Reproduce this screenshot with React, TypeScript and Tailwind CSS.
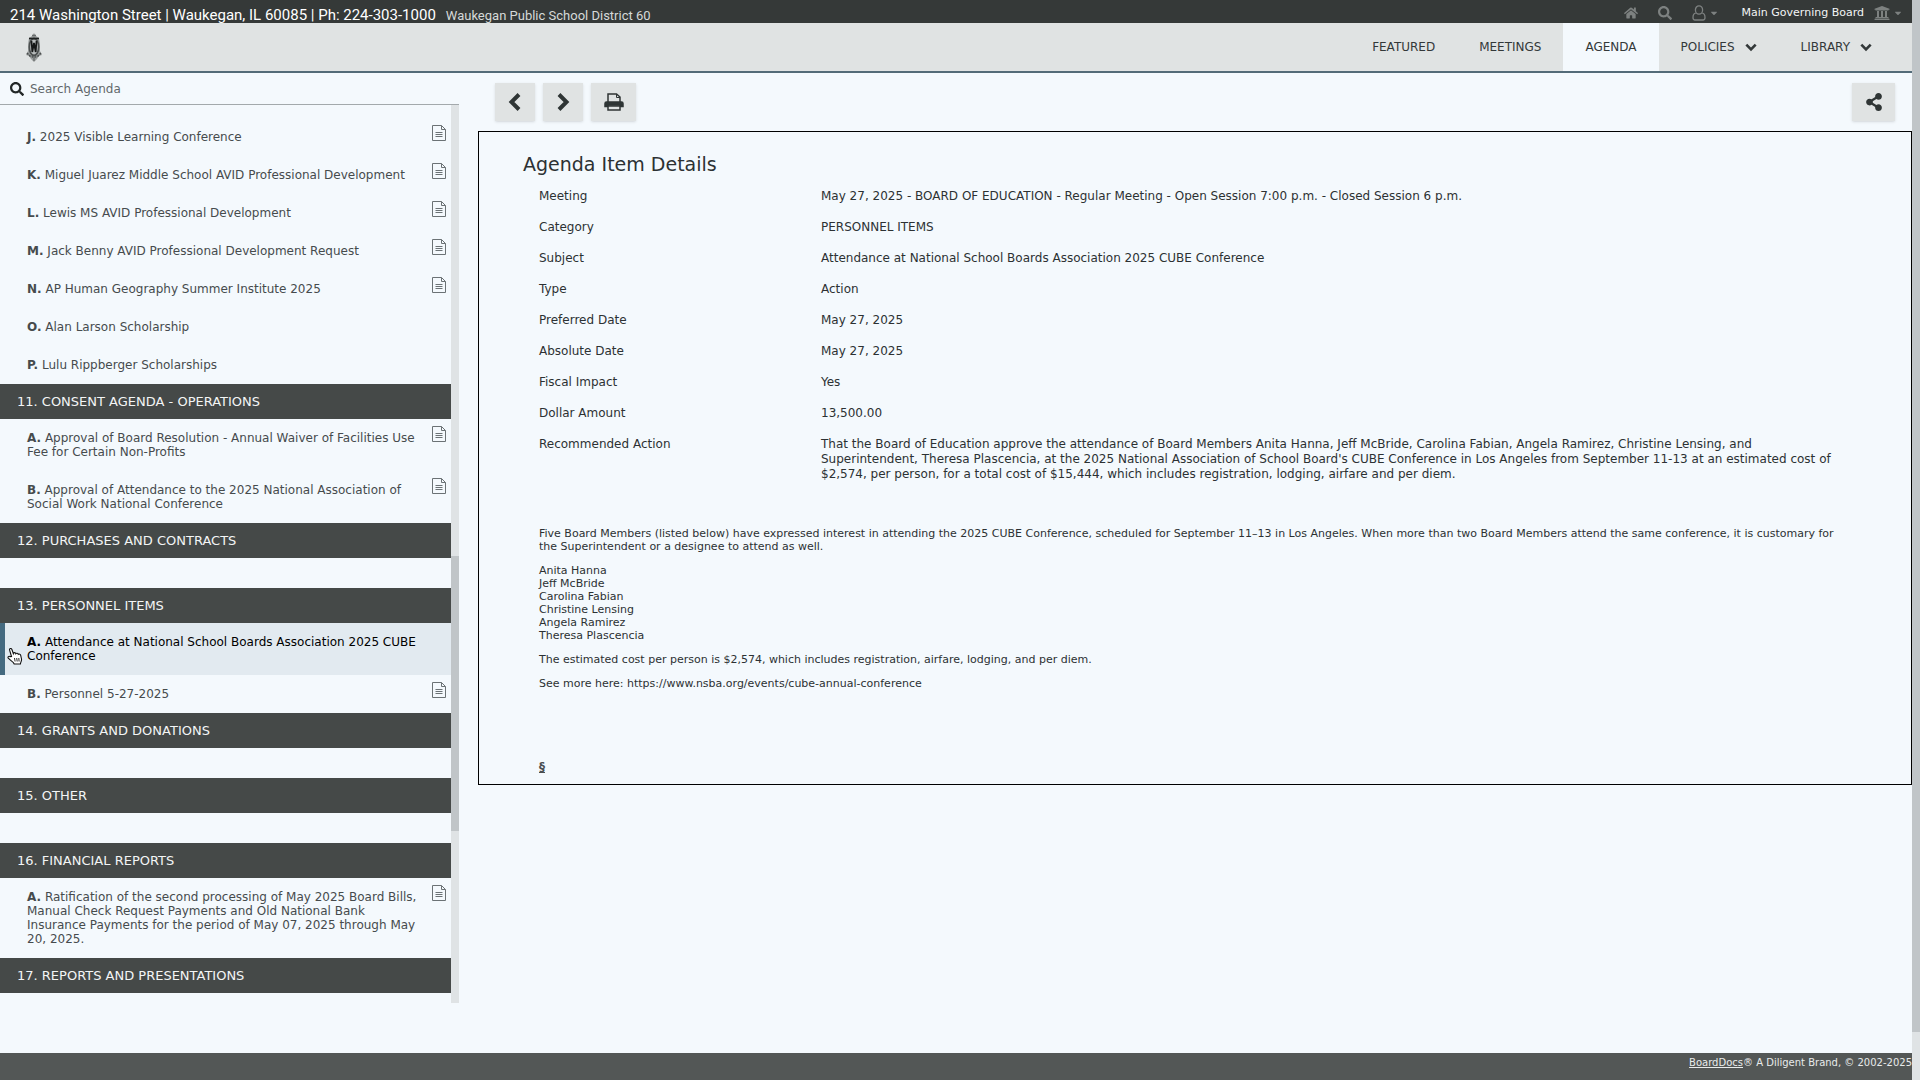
import React from "react";
import { FaCaretDown, FaHome, FaSearch, FaShareAlt, FaUniversity } from "react-icons/fa";

type Item = { letter: string; title: string; file?: boolean; active?: boolean };
type Section = { title?: string; items: Item[] };

const sections: Section[] = [
  {
    items: [
      { letter: "J", title: "2025 Visible Learning Conference", file: true },
      { letter: "K", title: "Miguel Juarez Middle School AVID Professional Development", file: true },
      { letter: "L", title: "Lewis MS AVID Professional Development", file: true },
      { letter: "M", title: "Jack Benny AVID Professional Development Request", file: true },
      { letter: "N", title: "AP Human Geography Summer Institute 2025", file: true },
      { letter: "O", title: "Alan Larson Scholarship" },
      { letter: "P", title: "Lulu Rippberger Scholarships" },
    ],
  },
  {
    title: "11. CONSENT AGENDA - OPERATIONS",
    items: [
      {
        letter: "A",
        title: "Approval of Board Resolution - Annual Waiver of Facilities Use Fee for Certain Non-Profits",
        file: true,
      },
      {
        letter: "B",
        title: "Approval of Attendance to the 2025 National Association of Social Work National Conference",
        file: true,
      },
    ],
  },
  { title: "12. PURCHASES AND CONTRACTS", items: [] },
  {
    title: "13. PERSONNEL ITEMS",
    items: [
      {
        letter: "A",
        title: "Attendance at National School Boards Association 2025 CUBE Conference",
        active: true,
      },
      { letter: "B", title: "Personnel 5-27-2025", file: true },
    ],
  },
  { title: "14. GRANTS AND DONATIONS", items: [] },
  { title: "15. OTHER", items: [] },
  {
    title: "16. FINANCIAL REPORTS",
    items: [
      {
        letter: "A",
        title:
          "Ratification of the second processing of May 2025 Board Bills, Manual Check Request Payments and Old National Bank Insurance Payments for the period of May 07, 2025 through May 20, 2025.",
        file: true,
      },
    ],
  },
  { title: "17. REPORTS AND PRESENTATIONS", items: [] },
];

const details = [
  ["Meeting", "May 27, 2025 - BOARD OF EDUCATION - Regular Meeting - Open Session 7:00 p.m. - Closed Session 6 p.m."],
  ["Category", "PERSONNEL ITEMS"],
  ["Subject", "Attendance at National School Boards Association 2025 CUBE Conference"],
  ["Type", "Action"],
  ["Preferred Date", "May 27, 2025"],
  ["Absolute Date", "May 27, 2025"],
  ["Fiscal Impact", "Yes"],
  ["Dollar Amount", "13,500.00"],
  [
    "Recommended Action",
    "That the Board of Education approve the attendance of Board Members Anita Hanna, Jeff McBride, Carolina Fabian, Angela Ramirez, Christine Lensing, and Superintendent, Theresa Plascencia, at the 2025 National Association of School Board's CUBE Conference in Los Angeles from September 11-13 at an estimated cost of $2,574, per person, for a total cost of $15,444, which includes registration, lodging, airfare and per diem.",
  ],
];

const members = [
  "Anita Hanna",
  "Jeff McBride",
  "Carolina Fabian",
  "Christine Lensing",
  "Angela Ramirez",
  "Theresa Plascencia",
];

function FileIcon() {
  return (
    <svg viewBox="0 0 14 16" className="h-4 w-3.5 shrink-0" fill="none" stroke="#6b7275" strokeWidth="1">
      <path d="M.5.5h9l4 4v11H.5z" />
      <path d="M9.5.5v4h4M3.5 7.5h7M3.5 9.5h7M3.5 11.5h7" />
    </svg>
  );
}

const chevrons = {
  left: "M13 1.500L5.500 9l7.500 7.500",
  right: "M5 1.500L12.500 9 5 16.500",
  down: "M2 5.500l7 7 7-7",
};

function Chevron({ direction, className }: { direction: keyof typeof chevrons; className: string }) {
  return (
    <svg viewBox="0 0 18 18" className={className} fill="none" stroke="currentColor" strokeWidth="4">
      <path d={chevrons[direction]} />
    </svg>
  );
}

function PrinterIcon() {
  return (
    <svg viewBox="0 0 20 18" className="h-[18px] w-5" fill="none" stroke="#2f3535" strokeWidth="1.5">
      <path d="M4 9V1h8.500L16 4v5" />
      <path d="M12.500 1v3.500H16" strokeWidth="1" />
      <path d="M1 13.500V10.500Q1 9 2.500 9h15Q19 9 19 10.500v3h-3V12H4v1.500z" fill="#2f3535" />
      <path d="M4 13h12v4H4z" fill="#e0e3e3" />
    </svg>
  );
}

function UserIcon() {
  return (
    <svg viewBox="0 0 14 16" className="h-4 w-3.5" fill="none" stroke="#7d8180" strokeWidth="1.3">
      <ellipse cx="7" cy="5" rx="3.600" ry="4.200" />
      <path d="M3.800 8.200C1.800 8.400 1 10 1 12.500 1 14 1.600 15 3 15h8c1.400 0 2-1 2-2.500 0-2.500-.8-4.100-2.800-4.300" />
    </svg>
  );
}

function Crest() {
  return (
    <svg viewBox="0 0 16 30" className="h-[30px] w-4">
      <path d="M8 1l2 3 3 2 1 6v7l2 4-3 1-2 3-3 3-3-3-2-3-3-1 2-4v-7l1-6 3-2z" fill="#9b9f9f" />
      <ellipse cx="8" cy="15" rx="5.500" ry="9.500" fill="#4c5050" />
      <ellipse cx="8" cy="15" rx="3.800" ry="7.500" fill="#b9bdbd" />
      <path d="M3 6.500h10" stroke="#1c1f1f" strokeWidth="1.600" />
      <path d="M5.500 9l.8 11L8 11l1.700 9 .8-11" fill="none" stroke="#161818" strokeWidth="1.700" />
      <path d="M1 21l3 3 4 1.500L12 24l3-3" fill="none" stroke="#4a4e4e" strokeWidth="1.500" strokeDasharray="2 1" />
      <path d="M6 3.500h4M8 26v3" fill="none" stroke="#6a6e6e" strokeWidth="1.300" />
    </svg>
  );
}

function HandCursor() {
  return (
    <svg viewBox="0 0 16 18" className="pointer-events-none absolute top-6 left-[7px] h-[18px] w-4">
      <path
        d="M4.500 9.500L2.600 3.200C2.200 1.300 4.300.8 4.900 2.500L6.300 6.500C6.600 5.300 8.500 5.300 8.800 6.700 9.400 5.900 11 6 11.300 7.300 12.200 6.700 13.400 7.100 13.700 8.400L14.500 12C14.800 14 13.600 15 13.400 17H7.200C6.500 15 4 14 1.300 11.200.4 10 2 8.800 3 9.600z"
        fill="#fff"
        stroke="#111"
        strokeWidth="1.100"
      />
      <path d="M7.500 11l.6 3.500M9.700 11l.5 3.500M11.800 11l.3 3.500" stroke="#111" strokeWidth=".9" />
    </svg>
  );
}

function AgendaItem({ item }: { item: Item }) {
  return (
    <li className={item.active ? "relative bg-[#e2eaf0]" : ""}>
      <a
        href="#item"
        className={
          item.active
            ? "flex items-start border-l-[5px] border-[#446a80] py-3 pr-[5px] pl-[22px] text-black"
            : "flex items-start py-3 pr-[5px] pl-[27px] text-[#464b4d]"
        }
      >
        <span className="w-[400px]">
          <b>{item.letter}.</b> {item.title}
        </span>
        {item.file && (
          <span className="-mt-[5px] -mb-2 ml-auto">
            <FileIcon />
          </span>
        )}
      </a>
      {item.active && <HandCursor />}
    </li>
  );
}

function Sidebar() {
  return (
    <aside className="w-[459px] shrink-0">
      <label className="flex h-8 items-center gap-1.5 border-b border-[#a3a9ac] pl-2.5">
        <FaSearch className="h-3.5 w-3.5 text-[#222727]" />
        <input
          type="text"
          aria-label="Search Agenda"
          placeholder="Search Agenda"
          className="flex-1 bg-transparent text-xs outline-none placeholder:text-[#62686b]"
        />
      </label>
      <div className="flex">
        <nav className="flex-1 pt-[13px] pb-2.5 text-xs leading-[14px]">
          {sections.map((section, i) => (
            <section key={i}>
              {section.title && (
                <h2 className="flex h-[35px] items-center bg-[#454948] pl-[17px] text-[13px] text-[#f3f5f5]">
                  {section.title}
                </h2>
              )}
              <ul className={section.items.length === 0 && i < sections.length - 1 ? "h-[30px]" : ""}>
                {section.items.map((item) => (
                  <AgendaItem key={item.letter} item={item} />
                ))}
              </ul>
            </section>
          ))}
        </nav>
        {/* list scrollbar */}
        <div className="flex w-2 flex-col bg-[#dfe3e5]">
          <div className="flex-[452]" />
          <div className="flex-[276] bg-[#c0c5c8]" />
          <div className="flex-[172]" />
        </div>
      </div>
    </aside>
  );
}

function TopBar() {
  return (
    <div className="flex h-[23px] items-center bg-[#353938] pr-2.5 pl-2.5">
      <p className="flex items-baseline gap-2.5 pt-2 font-['Roboto',sans-serif]">
        <span className="text-[15px] leading-4 text-white">
          214 Washington Street | Waukegan, IL 60085 | Ph: 224-303-1000
        </span>
        <span className="text-[13px] leading-4 text-[#d5d9d9]">Waukegan Public School District 60</span>
      </p>
      <div className="ml-auto flex items-center pt-0.5 text-[#7d8180]">
        <a href="#home" aria-label="Home" className="mr-5">
          <FaHome className="h-3.5 w-3.5" />
        </a>
        <button type="button" aria-label="Search" className="mr-5">
          <FaSearch className="h-3.5 w-3.5" />
        </button>
        <button type="button" aria-label="Account" className="mr-6 flex items-center gap-1">
          <UserIcon />
          <FaCaretDown className="h-2.5 w-2" />
        </button>
        <button type="button" className="flex items-center gap-1">
          <span className="mr-1.5 text-[11px] leading-4 text-[#f3f5f5]">Main Governing Board</span>
          <FaUniversity className="h-4 w-4" />
          <FaCaretDown className="h-2.5 w-2" />
        </button>
      </div>
    </div>
  );
}

function Header() {
  const link = "flex items-center gap-2.5 px-[22px]";
  return (
    <header className="flex h-[50px] items-stretch border-b-2 border-[#536b78] bg-[#e0e3e3] pr-[18px] pl-[26px]">
      <a href="#district" aria-label="District home" className="flex items-center">
        <Crest />
      </a>
      <nav className="ml-auto flex text-xs text-[#333839]">
        <a href="#featured" className={link}>FEATURED</a>
        <a href="#meetings" className={link}>MEETINGS</a>
        <a href="#agenda" className="flex items-center bg-[#f4f9fd] px-[22px]">AGENDA</a>
        <button type="button" className={link}>
          POLICIES <Chevron direction="down" className="h-3 w-3" />
        </button>
        <button type="button" className={link}>
          LIBRARY <Chevron direction="down" className="h-3 w-3" />
        </button>
      </nav>
    </header>
  );
}

function Toolbar() {
  const button = "flex h-[38px] items-center justify-center bg-[#e0e3e3] text-[#2f3535] shadow-sm";
  return (
    <div className="flex gap-2 pr-[17px] pl-[17px]">
      <button type="button" aria-label="Previous" className={`${button} w-10`}>
        <Chevron direction="left" className="h-[18px] w-[18px]" />
      </button>
      <button type="button" aria-label="Next" className={`${button} w-10`}>
        <Chevron direction="right" className="h-[18px] w-[18px]" />
      </button>
      <button type="button" aria-label="Print" className={`${button} w-[45px]`}>
        <PrinterIcon />
      </button>
      <button type="button" aria-label="Share" className={`${button} ml-auto w-[43px]`}>
        <FaShareAlt className="h-[18px] w-[18px]" />
      </button>
    </div>
  );
}

function Details() {
  return (
    <article className="mt-2.5 border border-black pt-5 pr-[66px] pb-[9px] pl-[60px] text-[#2c3133]">
      <h1 className="-ml-4 text-[19px] leading-6">Agenda Item Details</h1>
      <dl className="mt-[13px] flex flex-col gap-4 text-xs leading-[15px]">
        {details.map(([label, value]) => (
          <div key={label} className="flex">
            <dt className="w-[282px] shrink-0">{label}</dt>
            <dd>{value}</dd>
          </div>
        ))}
      </dl>
      <div className="mt-[45px] space-y-[11px] text-[11px] leading-[13px]">
        <p>
          Five Board Members (listed below) have expressed interest in attending the 2025 CUBE Conference, scheduled
          for September 11–13 in Los Angeles. When more than two Board Members attend the same conference, it is
          customary for the Superintendent or a designee to attend as well.
        </p>
        <ul>
          {members.map((name) => (
            <li key={name}>{name}</li>
          ))}
        </ul>
        <p>The estimated cost per person is $2,574, which includes registration, airfare, lodging, and per diem.</p>
        <p>See more here: https://www.nsba.org/events/cube-annual-conference</p>
      </div>
      <div className="mt-[69px] text-xs leading-4 font-bold text-[#4a4f51]">
        <a href="#top" className="underline">§</a>
      </div>
    </article>
  );
}

export default function App() {
  return (
    <div className="flex min-h-screen bg-[#f4f9fd] font-['Verdana','DejaVu_Sans',sans-serif]">
      <div className="flex min-w-0 flex-1 flex-col">
        <TopBar />
        <Header />
        <div className="flex flex-1">
          <Sidebar />
          <main className="min-w-0 flex-1 pt-2.5 pl-[19px]">
            <Toolbar />
            <Details />
          </main>
        </div>
        <footer className="h-[27px] bg-[#535756] pt-0.5 text-right text-[10px] leading-4 text-[#e8ebeb]">
          <a href="#boarddocs" className="underline">BoardDocs</a>® A Diligent Brand, © 2002-2025
        </footer>
      </div>
      {/* page scrollbar */}
      <div className="flex w-2 flex-col bg-[#dfe3e5]">
        <div className="flex-[1032] bg-[#c0c5c8]" />
        <div className="flex-[48]" />
      </div>
    </div>
  );
}
